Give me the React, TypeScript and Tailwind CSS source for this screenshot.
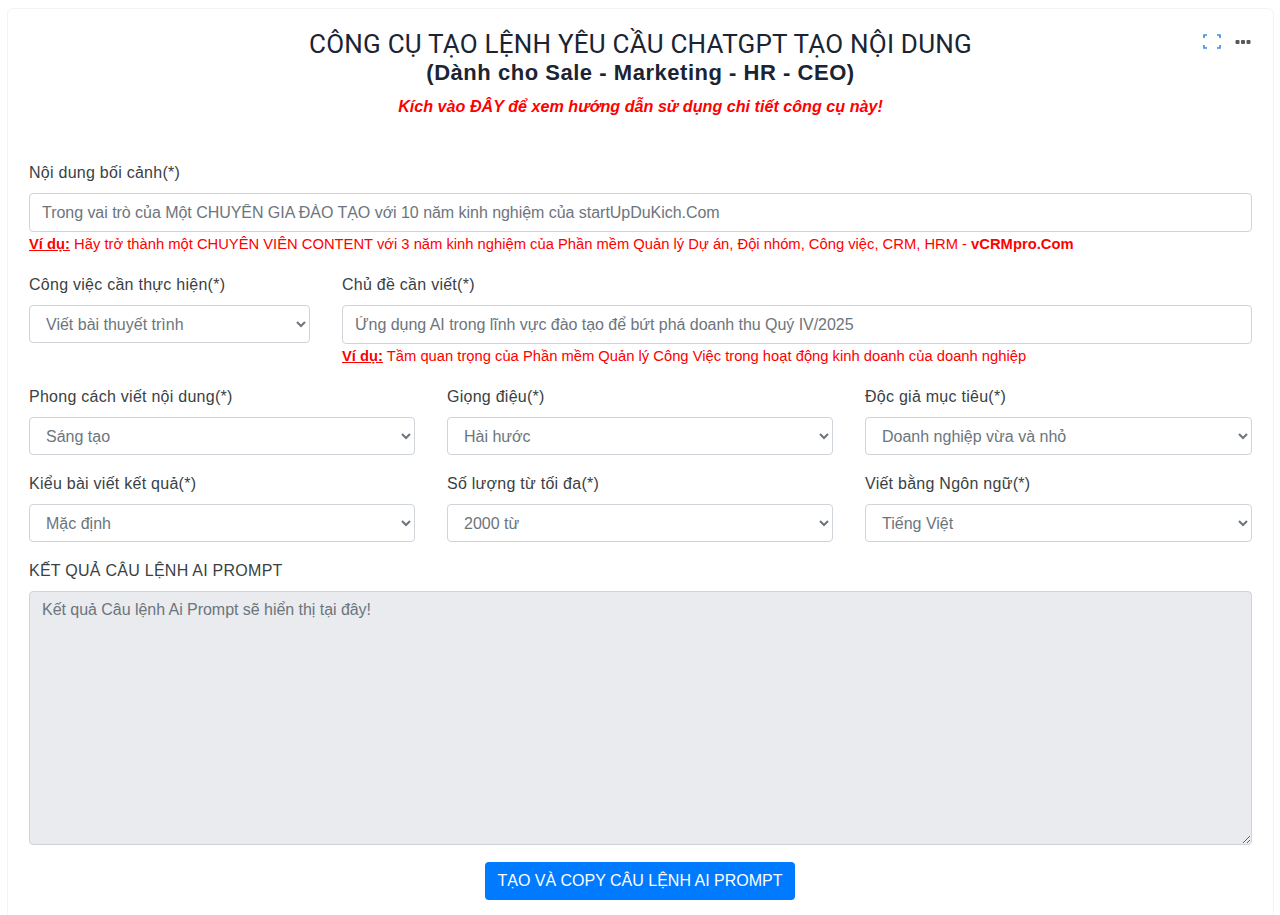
const labelClass = "mb-2 block h-6 text-base leading-6 tracking-[0.26px] text-[#3a3f44]";
const inputClass =
  "block w-full h-[39px] rounded border border-[#ced4da] bg-white px-3 text-base tracking-[-0.04px] text-[#495057] placeholder:text-[#6c757d] outline-none";
const selectClass =
  "block w-full h-[38px] rounded border border-[#ced4da] bg-white px-3 text-base text-[#6c757d] outline-none";

function Field({ label, value }: { label: string; value: string }) {
  return (
    <div>
      <label className={labelClass}>{label}</label>
      <select className={selectClass} defaultValue={value}>
        <option>{value}</option>
      </select>
    </div>
  );
}

function Hint({ children }: { children: React.ReactNode }) {
  return (
    <p className="mt-[2px] text-[14.75px] leading-[21px] text-[#ff0000]">
      <u className="font-bold">Ví dụ:</u> {children}
    </p>
  );
}

export default function App() {
  return (
    <div className="h-[915px] overflow-hidden bg-white pl-[7px] pr-[6px] pt-2 font-['Liberation_Sans',Arial,sans-serif]">
      <div className="relative h-[930px] rounded-t-md border border-[#f2f3f5] bg-white px-[21px] pt-[19px]">
        <div className="absolute right-[22px] top-[25px] flex items-start gap-[14px]">
          <svg width="18" height="15" viewBox="0 0 18 15" fill="none" stroke="#3f8fe8" strokeWidth="1.7">
            <path d="M1 4V1h3M14 1h3v3M17 11v3h-3M4 14H1v-3" />
          </svg>
          <svg width="16" height="15" viewBox="0 0 16 15" fill="#55595e">
            <rect x="0.5" y="6" width="4" height="4" rx="1" />
            <rect x="6" y="6" width="4" height="4" rx="1" />
            <rect x="11.5" y="6" width="4" height="4" rx="1" />
          </svg>
        </div>

        <div className="text-center">
          <h1 className="font-['Roboto',sans-serif] text-[26px] leading-[32px] tracking-[0.22px] text-[#1a2433]">
            CÔNG CỤ TẠO LỆNH YÊU CẦU CHATGPT TẠO NỘI DUNG
          </h1>
          <h2 className="text-[22px] font-bold leading-[26px] tracking-[0.53px] text-[#1a2433]">
            (Dành cho Sale - Marketing - HR - CEO)
          </h2>
          <p className="mt-2 text-[16.15px] font-bold italic leading-[24px] text-[#ff0000]">
            Kích vào ĐÂY để xem hướng dẫn sử dụng chi tiết công cụ này!
          </p>
        </div>

        <div className="mt-[43px]">
          <label className={labelClass}>Nội dung bối cảnh(*)</label>
          <input
            className={inputClass}
            placeholder="Trong vai trò của Một CHUYÊN GIA ĐÀO TẠO với 10 năm kinh nghiệm của startUpDuKich.Com"
          />
          <Hint>
            Hãy trở thành một CHUYÊN VIÊN CONTENT với 3 năm kinh nghiệm của Phần mềm Quản lý Dự án, Đội nhóm, Công
            việc, CRM, HRM - <b>vCRMpro.Com</b>
          </Hint>
        </div>

        <div className="mt-[18px] grid grid-cols-[281px_1fr] gap-x-8">
          <Field label="Công việc cần thực hiện(*)" value="Viết bài thuyết trình" />
          <div>
            <label className={labelClass}>Chủ đề cần viết(*)</label>
            <input
              className={inputClass}
              placeholder="Ứng dụng AI trong lĩnh vực đào tạo để bứt phá doanh thu Quý IV/2025"
            />
            <Hint>Tầm quan trọng của Phần mềm Quản lý Công Việc trong hoạt động kinh doanh của doanh nghiệp</Hint>
          </div>
        </div>

        <div className="mt-[18px] grid grid-cols-[386px_386px_387px] gap-x-8 gap-y-[17px]">
          <Field label="Phong cách viết nội dung(*)" value="Sáng tạo" />
          <Field label="Giọng điệu(*)" value="Hài hước" />
          <Field label="Độc giả mục tiêu(*)" value="Doanh nghiệp vừa và nhỏ" />
          <Field label="Kiểu bài viết kết quả(*)" value="Mặc định" />
          <Field label="Số lượng từ tối đa(*)" value="2000 từ" />
          <Field label="Viết bằng Ngôn ngữ(*)" value="Tiếng Việt" />
        </div>

        <div className="mt-[17px]">
          <label className={labelClass}>KẾT QUẢ CÂU LỆNH AI PROMPT</label>
          <textarea
            readOnly
            className="block h-[254px] w-full rounded border border-[#ced4da] bg-[#e9ebee] px-3 py-1.5 text-base tracking-[-0.04px] text-[#6c757d] outline-none"
            defaultValue="Kết quả Câu lệnh Ai Prompt sẽ hiển thị tại đây!"
          />
        </div>

        <div className="mt-[17px] flex justify-center pr-px">
          <button className="h-[38px] w-[310px] rounded bg-[#007bff] text-base text-white">
            TẠO VÀ COPY CÂU LỆNH AI PROMPT
          </button>
        </div>
      </div>
    </div>
  );
}
